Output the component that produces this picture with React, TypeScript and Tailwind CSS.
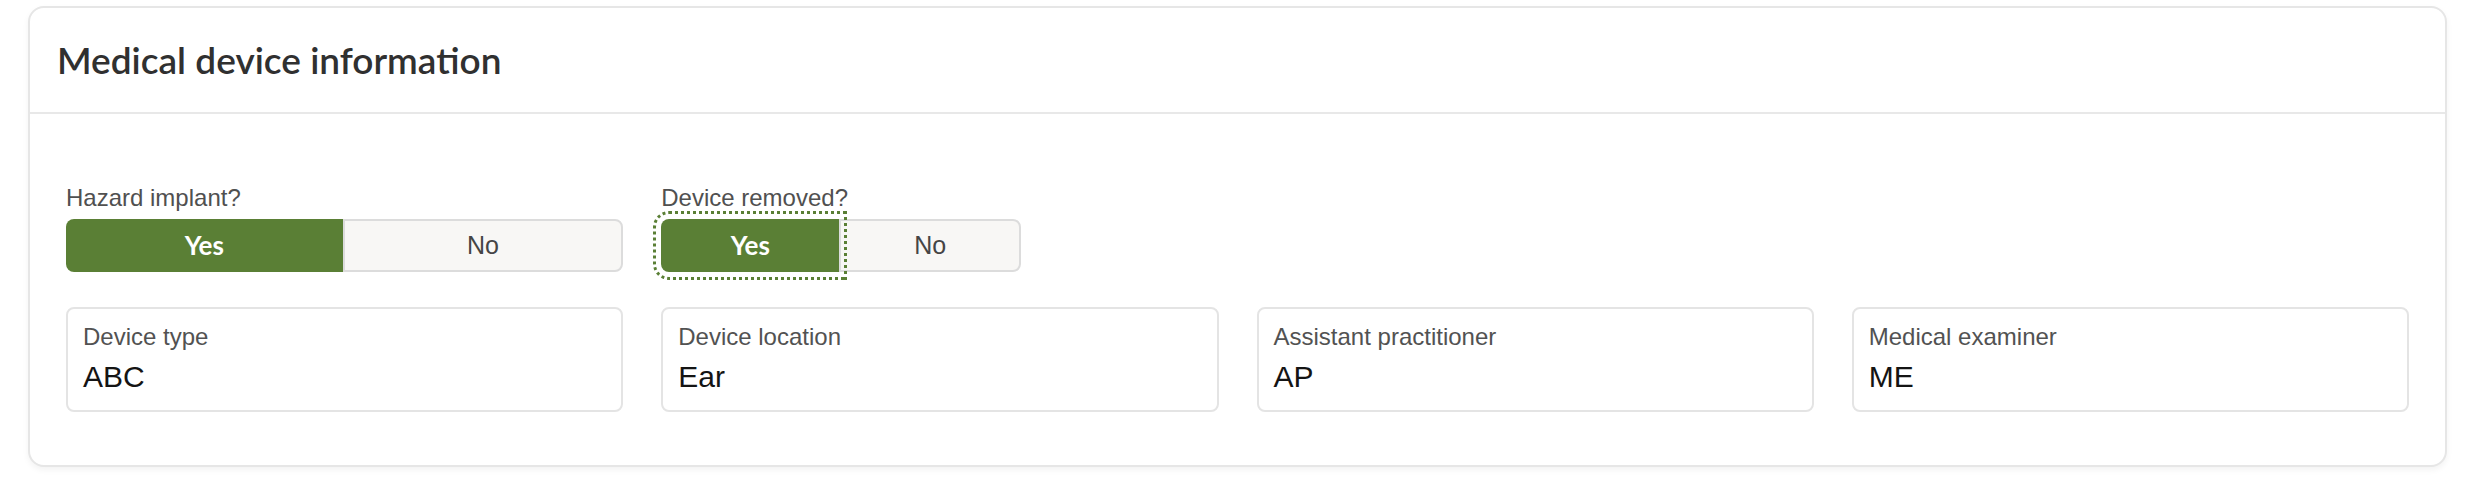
import React from "react";

const sans = "font-['Liberation_Sans',Arial,sans-serif]";
const heading = "font-['Lato','Noto_Sans',sans-serif]";

function YesNo({
  label,
  width,
  focused,
}: {
  label: string;
  width: string;
  focused?: boolean;
}) {
  return (
    <div className={`flex flex-col ${width}`}>
      <span className={`${sans} text-[24px] leading-[28px] text-[#505050]`}>{label}</span>
      <div className="mt-[7px] flex h-[53px]">
        <button
          className={`${heading} relative z-10 flex flex-1 items-center justify-center rounded-l-[8px] bg-[#5a7f35] text-[26px] font-bold text-white ${
            focused ? "outline-[3px] outline-offset-[5px] outline-dotted outline-[#5a7f35]" : ""
          }`}
        >
          Yes
        </button>
        <button
          className={`${sans} flex flex-1 items-center justify-center rounded-r-[8px] border-2 border-[#dcdcdc] bg-[#f8f7f5] text-[25px] text-[#454545]`}
        >
          No
        </button>
      </div>
    </div>
  );
}

function Field({ label, value }: { label: string; value: string }) {
  return (
    <div className="flex h-[105px] flex-col rounded-[8px] border-2 border-[#e4e4e4] bg-white pl-[15px] pt-[14px]">
      <span className={`${sans} text-[24px] leading-[28px] text-[#525252]`}>{label}</span>
      <span className={`${sans} mt-[9px] text-[30px] leading-[34px] text-[#141414]`}>{value}</span>
    </div>
  );
}

export default function App() {
  return (
    <div className="min-h-[492px] bg-white pl-[28px] pr-[35px] pt-[6px]">
      <section className="rounded-[16px] border-2 border-[#e6e6e6] bg-white shadow-[0_3px_6px_rgba(0,0,0,0.05)]">
        <header className="flex h-[106px] items-center border-b-2 border-[#e8e8e8] pl-[27px]">
          <h2 className={`${heading} text-[37px] font-semibold text-[#303030]`}>
            Medical device information
          </h2>
        </header>
        <div className="grid grid-cols-4 gap-x-[38px] px-[36px] pb-[53px] pt-[70px]">
          <YesNo label="Hazard implant?" width="w-full" />
          <YesNo label="Device removed?" width="w-[360px]" focused />
          <div />
          <div />
          <div className="col-span-4 mt-[35px] grid grid-cols-4 gap-x-[38px]">
            <Field label="Device type" value="ABC" />
            <Field label="Device location" value="Ear" />
            <Field label="Assistant practitioner" value="AP" />
            <Field label="Medical examiner" value="ME" />
          </div>
        </div>
      </section>
    </div>
  );
}
